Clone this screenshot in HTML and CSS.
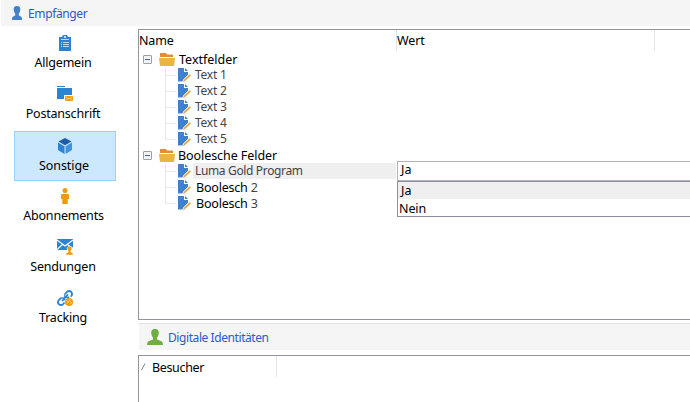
FILE: index.html
```html
<!DOCTYPE html>
<html lang="de">
<head>
<meta charset="utf-8">
<title>Empfänger</title>
<link rel="stylesheet" href="styles.css">
</head>
<body>
<svg class="defs" aria-hidden="true">
  <symbol id="person" viewBox="0 0 16 16" preserveAspectRatio="none"><path d="M8 0C5 0 4 2 4.300 4.500 4.500 7 5.500 8 6 8.700V10.500L1.500 12.300Q0 13 0 16H16Q16 13 14.500 12.300L10 10.500V8.700C10.500 8 11.500 7 11.700 4.500 12 2 11 0 8 0Z"/></symbol>
  <symbol id="user" viewBox="0 0 10 14"><path d="M5 0C2.500 0 1.500 1.500 1.700 4 1.900 6 2.800 7 3.200 7.600V9.500L.8 10.700Q0 11.200 0 14H10Q10 11.200 9.200 10.700L6.800 9.500V7.600C7.200 7 8.100 6 8.300 4 8.500 1.500 7.500 0 5 0Z"/></symbol>
  <symbol id="folder" viewBox="0 0 16 13"><path fill="#e08f35" d="M1 0H7L8 1.500H14V4H1Z"/><path fill="#e6b840" d="M0 5H16L15 13H1Z"/></symbol>
  <symbol id="doc" viewBox="0 0 14 14"><path fill="#4280cb" d="M0 0H6V4H10V7L4 13.500H0Z"/><path fill="#4280cb" d="M7 0L10 3H7Z"/><path d="M6 12.800L12.300 6.800" stroke="#fff" stroke-width="3"/><path d="M6 12.800L12.300 6.800" stroke="#e9a23f" stroke-width="1.700"/><path d="M5 13.800L6.700 13" stroke="#bbb"/></symbol>
</svg>
<header class="bar top"><svg class="user"><use href="#user"/></svg><span class="t-emp">Empfänger</span></header>
<div class="content">
  <nav class="side">
    <a class="item"><svg viewBox="0 0 16 16"><path fill="#2d83d3" d="M2 2H5L6 0H10L11 2H14V16H2Z"/><path fill="#fff" d="M7 1H9V3H7ZM4 4H12V5H4ZM4 7H5V8H4ZM6 7H12V8H6ZM4 9H5V10H4ZM6 9H12V10H6ZM4 11H5V12H4ZM6 11H12V12H6Z" opacity=".7"/></svg><span class="t-all">Allgemein</span></a>
    <a class="item"><svg viewBox="0 0 16 16"><path fill="#2d83d3" d="M0 0H8V1H0ZM0 2H15V9H7V13H0Z"/><path fill="#f09a0a" d="M8 10H16V15H8Z"/><path d="M8.500 10.500L12 13L15.500 10.500M8.500 14.500L11 12.500M15.500 14.500L13 12.500" fill="none" stroke="#ffe2aa" stroke-width=".7"/></svg><span class="t-post">Postanschrift</span></a>
    <a class="item active"><svg viewBox="0 0 16 16"><path fill="#1c5da9" d="M8 0L14.500 3.500L8 7.300L1.500 3.500Z"/><path fill="#2d83d3" d="M1 4.500L7.500 8.200V16L1 12Z"/><path fill="#3f94e0" d="M15 4.500L8.500 8.200V16L15 12Z"/></svg><span class="t-son">Sonstige</span></a>
    <a class="item"><svg viewBox="0 0 16 16"><circle fill="#f09a0a" cx="8" cy="2.500" r="2.500"/><path fill="#f09a0a" d="M5 6H11Q12 6 12 7V11H10.700V16H5.300V11H4V7Q4 6 5 6Z"/></svg><span class="t-abo">Abonnements</span></a>
    <a class="item"><svg viewBox="0 0 16 16"><path fill="#2d83d3" d="M0 0H16V9H10V11H0Z"/><path d="M0 1L8 7L16 1M0 10.500L5.500 5.500M10.500 5.500L16 9.500" fill="none" stroke="#fff" stroke-width="1.100"/><path fill="#f09a0a" stroke="#fff" stroke-width=".5" d="M12.500 7.300C9.700 7.300 9.700 10 11.200 12V13L9 14.300V16H16V14.300L13.800 13V12C15.300 10 15.300 7.300 12.500 7.300Z"/></svg><span class="t-sen">Sendungen</span></a>
    <a class="item"><svg viewBox="0 0 16 16"><g fill="none" stroke="#2d83d3" stroke-width="1.800" stroke-linecap="round"><path d="M8 4L10 1.800Q12.300 0 14.300 2 15.800 4.300 14.300 6M11.500 7.500Q9 8 7.700 6"/><path d="M4 8L1.800 10Q0 12.300 2 14.300 4 15.800 6 14.200L7 13.200M7.500 9.500Q7 8.500 6 8M5.500 10.500L10.500 5"/></g><circle fill="#f09a0a" cx="12" cy="12" r="4"/><path d="M9 10.500L11.500 11.500L10.500 13.500M13 9L12.500 11L14.500 12.500L13.500 14" fill="none" stroke="#ffe0a5" stroke-width=".8"/></svg><span class="t-tra">Tracking</span></a>
  </nav>
  <main class="main">
    <section class="tree">
      <div class="thead"><div class="c1"><span class="t-name">Name</span></div><div class="c2"><span class="t-wert">Wert</span></div></div>
      <div class="group"><i class="toggle"></i><svg class="folder"><use href="#folder"/></svg><span class="t-txt">Textfelder</span></div>
      <div class="kids">
        <div class="row"><svg><use href="#doc"/></svg><span class="t-n">Text 1</span></div>
        <div class="row"><svg><use href="#doc"/></svg><span class="t-n">Text 2</span></div>
        <div class="row"><svg><use href="#doc"/></svg><span class="t-n">Text 3</span></div>
        <div class="row"><svg><use href="#doc"/></svg><span class="t-n">Text 4</span></div>
        <div class="row"><svg><use href="#doc"/></svg><span class="t-n">Text 5</span></div>
      </div>
      <div class="group"><i class="toggle"></i><svg class="folder"><use href="#folder"/></svg><span class="t-boo">Boolesche Felder</span></div>
      <div class="kids">
        <div class="row"><svg><use href="#doc"/></svg><div class="sel"><span class="t-luma">Luma Gold Program</span></div></div>
        <div class="row"><svg><use href="#doc"/></svg><span class="t-bo"><b>Boolesch</b> 2</span></div>
        <div class="row"><svg><use href="#doc"/></svg><span class="t-bo"><b>Boolesch</b> 3</span></div>
      </div>
      <div class="combo">
        <div class="value">Ja</div>
        <div class="options"><div class="opt on">Ja</div><div class="opt nein">Nein</div></div>
      </div>
    </section>
    <div class="bar sub"><svg><use href="#person"/></svg><span class="t-dig">Digitale Identitäten</span></div>
    <section class="visitors"><div class="vhead"><svg viewBox="0 0 5 8"><path d="M.5 7L4 .5" stroke="#777" stroke-width=".9"/></svg><span class="t-bes">Besucher</span></div></section>
  </main>
</div>
</body>
</html>
```
FILE: styles.css
```css
* { box-sizing: border-box; }
body { margin: 0; width: 690px; height: 402px; overflow: hidden; background: #fff; color: #000; font: 12.5px/16px "Noto Sans", "Open Sans", sans-serif; white-space: nowrap; }
svg { display: block; flex: none; }
.defs { position: absolute; width: 0; height: 0; }
.bar { display: flex; align-items: center; background: #f5f5f5; color: #2a5bc9; }
.t-emp, .t-dig { font-size: 12px; letter-spacing: -.38px; padding-top: 1px; }
.t-dig { letter-spacing: -.42px; }
.top { height: 26px; margin-left: 1px; padding-left: 11px; }
.user { width: 10px; height: 14px; fill: #4481c9; margin: 0 6px 1px 0; }
.content { display: flex; height: 376px; }
.side { width: 138px; padding: 3px 0 0 14px; }
.item { display: flex; flex-direction: column; align-items: center; width: 102px; height: 51px; padding-top: 6px; }
.item svg { width: 16px; height: 16px; }
.item span { margin: 4px 4px 0 0; letter-spacing: -.2px; }
.item .t-son { margin-right: 2px; letter-spacing: -.05px; }
.item.active { height: 50px; margin-bottom: 1px; background: #cce8ff; border: 1px solid #99d1ff; }
.item .t-abo { margin-right: 3px; }
.main { flex: 1; min-width: 0; padding-top: 3px; }
.tree { position: relative; height: 291px; border: 1px solid #94949b; border-right: 0; }
.thead { display: flex; height: 21px; line-height: 22px; }
.c1, .c2 { width: 258px; border-right: 1px solid #e4e4e4; }
.t-name { letter-spacing: -.15px; }
.t-wert { letter-spacing: -.1px; }
.group { display: flex; align-items: center; height: 16px; padding-left: 4px; }
.group span { padding-top: 1px; }
.t-boo { margin-left: -1px; letter-spacing: -.07px; }
.toggle { width: 9px; height: 9px; border: 1px solid #a0a0a0; border-radius: 1px; background: linear-gradient(#4b63a7, #4b63a7) center / 5px 1px no-repeat #f4f4f4; margin-right: 7px; }
.folder { width: 16px; height: 13px; margin-right: 4px; }
.kids { margin-left: 26px; background: linear-gradient(#e8e8e8, #e8e8e8) 0 0 / 1px calc(100% - 8px) no-repeat; }
.row { display: flex; align-items: center; height: 16px; color: #444; background: linear-gradient(#e8e8e8, #e8e8e8) 0 8px / 11px 1px no-repeat; padding-left: 13px; }
.row svg { width: 14px; height: 14px; margin-right: 3px; }
.row b { font-weight: 400; color: #000; }
.t-n { font-size: 12px; letter-spacing: -.25px; }
.t-luma { font-size: 12px; letter-spacing: -.35px; }
.t-bo { padding: 1px 0 0 1px; letter-spacing: -.2px; }
.sel { width: 203px; margin-left: -2px; padding-left: 2px; background: #efefef; }
.combo { position: absolute; left: 258px; top: 131px; width: 293px; }
.value { height: 20px; border: 1px solid #b0b3b7; border-right: 0; padding-left: 3px; background: #fff; line-height: 16px; }
.options { height: 36px; border: 1px solid #8d909b; border-right: 0; background: #fff; }
.opt { height: 17px; line-height: 18px; padding-left: 3px; }
.opt.on { background: #efefef; }
.opt.nein { padding-left: 1px; line-height: 19px; letter-spacing: -.1px; }
.sub { height: 27px; margin: 3px 0 5px 1px; padding-left: 8px; border-top: 1px solid #e2e2e2; }
.sub svg { width: 16px; height: 16px; fill: #70ad42; margin-right: 5px; }
.visitors { height: 60px; border: 1px solid #94949b; border-right: 0; border-bottom: 0; }
.vhead { display: flex; align-items: center; width: 138px; height: 21px; border-right: 1px solid #e4e4e4; padding-left: 2px; }
.vhead svg { width: 5px; height: 8px; margin-right: 6px; }
.t-bes { padding-top: 2px; letter-spacing: -.35px; }
```
